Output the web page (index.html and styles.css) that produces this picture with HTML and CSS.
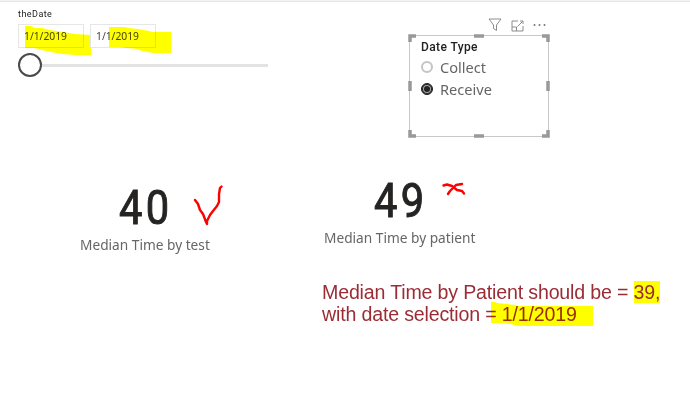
FILE: index.html
```html
<!DOCTYPE html>
<html lang="en">
<head>
  <meta charset="UTF-8">
  <title>Median Time Report</title>
  <link rel="stylesheet" href="styles.css">
</head>
<body>
  <div class="topbar"></div>
  <div class="report">
    <div class="date-slicer">
      <div class="slicer-title">theDate</div>
      <div class="date-inputs">
        <div class="date-box"><span>1/1/2019</span>
          <svg class="marker" width="68" height="32" viewBox="0 0 68 32"><path d="M0 0H7L9 2H17L25 4L38 6L50 8L66 9V29H51L37 28L26 26L17 24L9 22H0Z"/></svg>
        </div>
        <div class="date-box second"><span>1/1/2019</span>
          <svg class="marker" width="64" height="30" viewBox="0 0 64 30"><path d="M0 1H17L19 2L29 3L40 5L44 6H62V27H44L33 25L28 23L18 22L11 21H0Z"/></svg>
        </div>
      </div>
      <div class="slider">
        <div class="handle"></div>
        <div class="track"></div>
      </div>
    </div>

    <div class="type-slicer">
      <div class="visual-header">
        <svg width="14" height="14" viewBox="0 0 14 14"><path d="M1 1H13L8.500 7V12.500L5.500 10.500V7Z"/></svg>
        <svg width="13" height="14" viewBox="0 0 13 14"><path d="M7 3H1V13H12V8M1 9H5.500V13M6.500 8.500L11.500 3.500M9 3H12V6"/></svg>
        <svg class="dots" width="13" height="14" viewBox="0 0 13 14"><circle cx="1.500" cy="7" r="1"/><circle cx="6.500" cy="7" r="1"/><circle cx="11.500" cy="7" r="1"/></svg>
      </div>
      <div class="type-box">
        <h2>Date Type</h2>
        <div class="option"><i class="radio"></i><span>Collect</span></div>
        <div class="option"><i class="radio selected"></i><span>Receive</span></div>
        <svg class="grips" width="142" height="104" viewBox="0 0 142 104">
          <path d="M2 8V2H8M134 2H140V8M140 96V102H134M8 102H2V96M66 2H76M66 102H76M2 47V57M140 47V57"/>
        </svg>
      </div>
    </div>

    <div class="card test">
      <div class="value-row">
        <span class="value">40</span>
        <svg width="30" height="42" viewBox="0 0 30 42"><path d="M2 15L5 19L7 25L10 29L13 37L14 39L14 36L17 30L20 26L24 21L26 17L26 9L27 3L28.500 1.500"/></svg>
      </div>
      <div class="label">Median Time by test</div>
    </div>

    <div class="card patient">
      <div class="value-row">
        <span class="value">49</span>
        <svg width="24" height="14" viewBox="0 0 24 14"><path d="M1.500 3.500L5 2.500L10 4L15 8L20 9L22 11.500M20 2L14 3L11 6L8 9L6 12"/></svg>
      </div>
      <div class="label">Median Time by patient</div>
    </div>

    <div class="note">
      <div>Median Time by Patient should be = <mark>39,</mark></div>
      <div>with date selection <span class="result">= 1/1/2019
        <svg class="marker" width="103" height="26" viewBox="0 0 103 26"><path d="M0 1H4L6 2L25 4V5H102V25H28L19 23L11 22H0Z"/></svg></span></div>
    </div>
  </div>
</body>
</html>
```
FILE: styles.css
```css
body {
  margin: 0;
  background: #fff;
  font-family: "Noto Sans", "Open Sans", sans-serif;
  color: #666;
  overflow: hidden;
}

.topbar {
  height: 1px;
  background: #f3f3f3;
  border-bottom: 1px solid #e6e6e6;
}

.report {
  display: grid;
  grid-template-columns: 322px 368px;
  grid-template-rows: 176px 98px 143px;
}

/* Date range slicer */
.date-slicer {
  padding: 5px 0 0 18px;
}

.slicer-title {
  height: 17px;
  font: 9px/14px Roboto, sans-serif;
  letter-spacing: 0.45px;
  color: #222;
}

.date-inputs {
  display: flex;
  gap: 6px;
}

.date-box {
  position: relative;
  box-sizing: border-box;
  width: 66px;
  height: 24px;
  padding-left: 5px;
  border: 1px solid #e6e6e6;
  font-size: 10.3px;
  line-height: 23px;
  color: #444;
}

.marker {
  position: absolute;
  left: 6px;
  top: 1px;
  fill: #ff0;
  mix-blend-mode: multiply;
}

.second .marker {
  left: 18px;
}

.slider {
  display: flex;
  align-items: center;
  width: 250px;
  margin-top: 5px;
}

.handle {
  box-sizing: border-box;
  width: 24px;
  height: 24px;
  border: 2px solid #4a4a4a;
  border-radius: 50%;
}

.track {
  flex: 1;
  height: 3px;
  background: #e3e3e3;
}

/* Date type slicer */
.type-slicer {
  width: 142px;
  margin-left: 86px;
  padding-top: 16px;
}

.visual-header {
  display: flex;
  justify-content: flex-end;
  gap: 9px;
  height: 16px;
  padding-right: 4px;
}

.visual-header svg {
  fill: none;
  stroke: #8c8c8c;
}

.visual-header .dots {
  fill: #777;
  stroke: none;
}

.type-box {
  position: relative;
  box-sizing: border-box;
  height: 104px;
  padding: 6px 0 0 13px;
}

.type-box h2 {
  margin: 0 0 2px;
  font: 500 12px/14px Roboto, sans-serif;
  letter-spacing: 0.4px;
  color: #222;
}

.option {
  display: flex;
  align-items: center;
  gap: 7px;
  height: 22px;
  font-size: 14.6px;
}

.radio {
  box-sizing: border-box;
  width: 12px;
  height: 12px;
  border: 2px solid #c4c4c4;
  border-radius: 50%;
}

.radio.selected {
  border: 1px solid #222;
  background: #222;
  box-shadow: inset 0 0 0 1px #222, inset 0 0 0 2px #aaa;
}

.grips {
  position: absolute;
  left: 0;
  top: 0;
  fill: none;
  stroke: #999;
  stroke-width: 3.5px;
  background: linear-gradient(#c8c8c8, #c8c8c8) 1px 1px / 140px 1px no-repeat,
    linear-gradient(#c8c8c8, #c8c8c8) 1px 102px / 140px 1px no-repeat,
    linear-gradient(#c8c8c8, #c8c8c8) 1px 1px / 1px 102px no-repeat,
    linear-gradient(#c8c8c8, #c8c8c8) 140px 1px / 1px 102px no-repeat;
}

/* Cards */
.card.test {
  padding: 7px 0 0 80px;
}

.card.patient {
  padding-left: 2px;
}

.value-row {
  display: flex;
  height: 50px;
  padding-left: 39px;
}

.value {
  width: 53px;
  font: 49px/46px Roboto, sans-serif;
  letter-spacing: 4px;
  color: #252423;
  -webkit-text-stroke: 1px #252423;
  transform: scaleX(0.85);
  transform-origin: left;
}

.value-row svg {
  margin-left: 21px;
  fill: none;
  stroke: #f00;
  stroke-width: 2.4px;
  stroke-linecap: round;
  stroke-linejoin: round;
}

.label {
  font-size: 13.7px;
  line-height: 20px;
}

.patient .value-row {
  padding-left: 50px;
}

.patient .value-row svg {
  margin: 4px 0 0 15px;
}

/* Comment */
.note {
  grid-column: 2;
  padding-top: 5px;
  font: 19.6px/22px "Liberation Sans", Arial, sans-serif;
  letter-spacing: -0.17px;
  color: #9b2c35;
  white-space: nowrap;
}

.note mark {
  background: #ff0;
  color: inherit;
}

.result {
  position: relative;
}

.result .marker {
  left: 6px;
  top: -2px;
}
```
